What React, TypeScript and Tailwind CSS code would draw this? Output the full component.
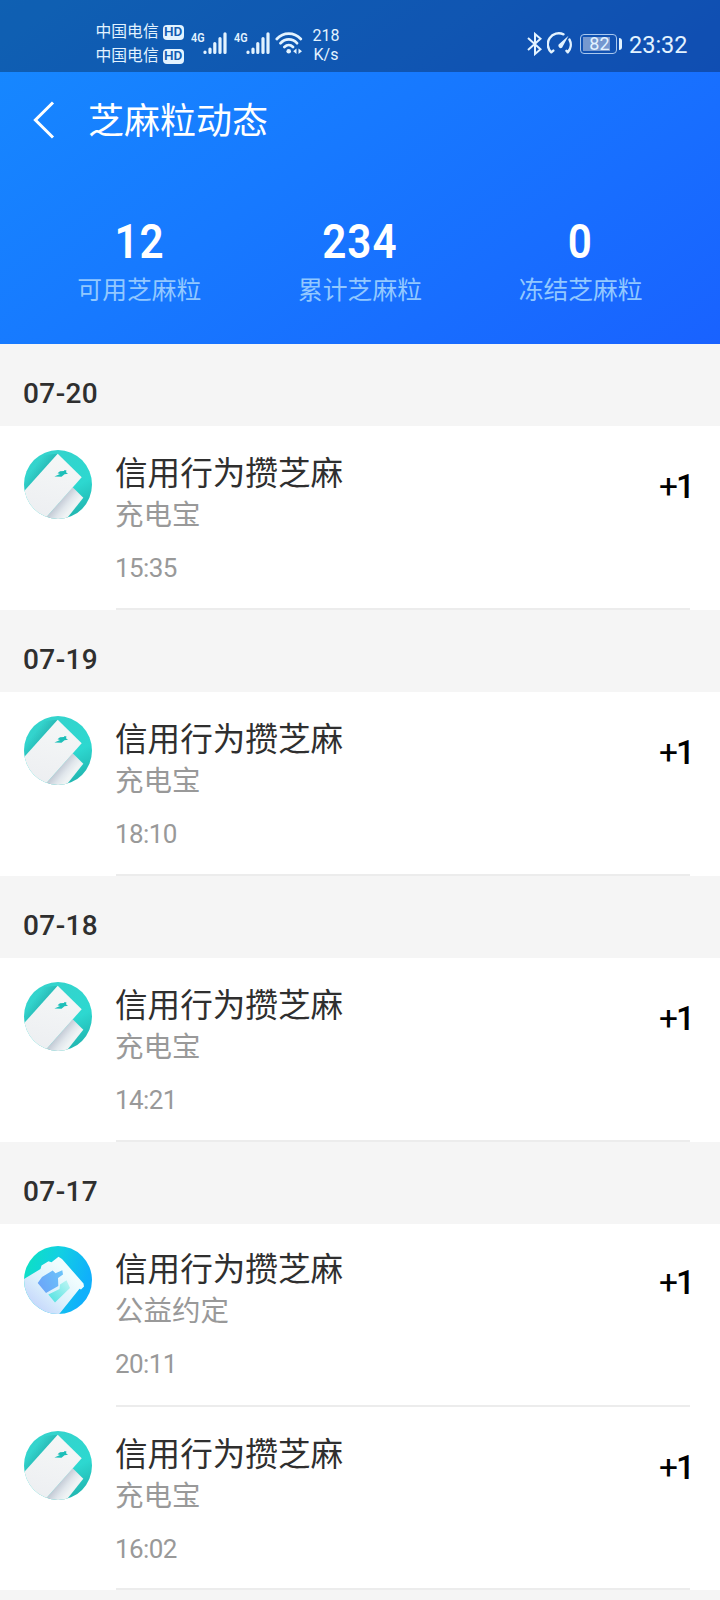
import clsx from 'clsx';

interface SesameRecord {
  title: string;
  source: string;
  time: string;
  points: number;
  kind: 'powerbank' | 'charity';
}

interface DayGroup {
  date: string;
  records: SesameRecord[];
}

const TITLE = '信用行为攒芝麻';

const stats = [
  { value: 12, label: '可用芝麻粒' },
  { value: 234, label: '累计芝麻粒' },
  { value: 0, label: '冻结芝麻粒' },
];

const groups: DayGroup[] = [
  { date: '07-20', records: [{ title: TITLE, source: '充电宝', time: '15:35', points: 1, kind: 'powerbank' }] },
  { date: '07-19', records: [{ title: TITLE, source: '充电宝', time: '18:10', points: 1, kind: 'powerbank' }] },
  { date: '07-18', records: [{ title: TITLE, source: '充电宝', time: '14:21', points: 1, kind: 'powerbank' }] },
  {
    date: '07-17',
    records: [
      { title: TITLE, source: '公益约定', time: '20:11', points: 1, kind: 'charity' },
      { title: TITLE, source: '充电宝', time: '16:02', points: 1, kind: 'powerbank' },
    ],
  },
];

function PowerBankIcon() {
  return (
    <svg viewBox="0 0 68 69" className="h-[69px] w-[68px] shrink-0">
      <defs>
        <clipPath id="pb-clip">
          <ellipse cx="34" cy="34.5" rx="34" ry="34.5" />
        </clipPath>
        <linearGradient id="pb-bg" x1="0.3" y1="0" x2="0.8" y2="1">
          <stop offset="0" stopColor="#35d3cc" />
          <stop offset="0.6" stopColor="#2dd8d0" />
          <stop offset="1" stopColor="#1fb0ab" />
        </linearGradient>
        <linearGradient id="pb-left" gradientUnits="userSpaceOnUse" x1="10" y1="17" x2="19" y2="24">
          <stop offset="0" stopColor="#1f9c9c" stopOpacity="0" />
          <stop offset="1" stopColor="#1f9c9c" stopOpacity="0.5" />
        </linearGradient>
        <linearGradient id="pb-back" gradientUnits="userSpaceOnUse" x1="34" y1="52" x2="45" y2="61">
          <stop offset="0" stopColor="#bfc6d2" />
          <stop offset="0.6" stopColor="#e1e7ec" />
          <stop offset="1" stopColor="#eff3f4" />
        </linearGradient>
        <linearGradient id="pb-card" x1="0.6" y1="0" x2="0.4" y2="1">
          <stop offset="0" stopColor="#f5f7f7" />
          <stop offset="1" stopColor="#eceef1" />
        </linearGradient>
      </defs>
      <g clipPath="url(#pb-clip)">
        <rect width="68" height="69" fill="url(#pb-bg)" />
        <path d="M20 5 33.7 3.8 1 40.2-4 34Z" fill="url(#pb-left)" />
        <path d="M48.7 37.3 59.3 47.8 40 72H18Z" fill="url(#pb-back)" />
        <path d="M33.7 3.8 57.7 27.2 22.7 66.8 18 72-6 48Z" fill="url(#pb-card)" />
        <path d="M36 21.3 40 21 40.5 20 42.5 20.5 42 22.3 44 23.8 40.5 24.3 37.5 26.8 30.4 26.6 36 24 33.5 23.2Z" fill="#1dbfb9" />
      </g>
    </svg>
  );
}

function CharityIcon() {
  return (
    <svg viewBox="0 0 68 68" className="h-[68px] w-[68px] shrink-0">
      <defs>
        <clipPath id="ch-clip">
          <circle cx="34" cy="34" r="34" />
        </clipPath>
        <linearGradient id="ch-bg" x1="0" y1="0.3" x2="0.9" y2="0.6">
          <stop offset="0" stopColor="#0de0c4" />
          <stop offset="0.45" stopColor="#12d0e2" />
          <stop offset="1" stopColor="#10b0fb" />
        </linearGradient>
        <linearGradient id="ch-card" x1="0.75" y1="0.25" x2="0.2" y2="0.8">
          <stop offset="0" stopColor="#f0fdfe" />
          <stop offset="0.5" stopColor="#dcf1fc" />
          <stop offset="1" stopColor="#c3d4fb" />
        </linearGradient>
        <linearGradient id="ch-blue" x1="0" y1="0.6" x2="1" y2="0.2">
          <stop offset="0" stopColor="#6ba5f8" />
          <stop offset="1" stopColor="#6bc3fa" />
        </linearGradient>
        <linearGradient id="ch-teal" x1="0" y1="1" x2="1" y2="0">
          <stop offset="0" stopColor="#4be0e0" />
          <stop offset="1" stopColor="#c0f6f4" />
        </linearGradient>
      </defs>
      <g clipPath="url(#ch-clip)">
        <rect width="68" height="68" fill="url(#ch-bg)" />
        <path d="M34.5 10.8 38 13 59.5 37.5 60 40.5 57 43.5 55.5 42.8 32 72-8 50 0 33 16.5 23 17.5 19.5 24.5 15.2 27.5 16.2Z" fill="url(#ch-card)" />
        <path d="M13.7 37 18 31 28.7 24.5 31.5 27.3 38.3 24.3 39 28.6 34 32 34.3 40 22 47Z" fill="url(#ch-blue)" />
        <path d="M24.3 48.5 35.5 43 36 38.5 42.5 34.3 46 42 31 56.6Z" fill="url(#ch-teal)" />
      </g>
    </svg>
  );
}

function HdBadge() {
  return (
    <span className="flex h-[15px] w-[21px] items-center justify-center rounded-[4px] bg-[#e3f3ff] text-[13.5px] leading-none font-semibold text-[#115ab0]">
      HD
    </span>
  );
}

function Carrier() {
  return (
    <div className="flex h-6 items-center gap-1">
      <span className="text-[15.8px] leading-6">中国电信</span>
      <HdBadge />
    </div>
  );
}

function Signal() {
  return (
    <div className="flex h-[22px] w-[37px] items-start">
      <span className="w-3 origin-left scale-x-[0.8] text-[13.5px] leading-[11px] font-semibold">4G</span>
      <svg viewBox="0 0 24 22" className="h-[22px] w-6" fill="none" stroke="currentColor" strokeWidth="3.2" strokeLinecap="round">
        <path d="M2 20V20.4M7 17V20.4M11.8 11.5V20.4M17 6.5V20.4M22 1.8V20.4" />
      </svg>
    </div>
  );
}

function WifiIcon() {
  return (
    <svg viewBox="0 0 28 22" className="h-[22px] w-7" fill="none" stroke="currentColor" strokeWidth="2.7" strokeLinecap="round">
      <path d="M1.8 7C8.5-0.3 19-0.3 25.8 7M5.5 11.2C10.3 6.2 17.3 6.2 22 11.2M9.4 15C12 12.5 15.5 12.5 18 15" />
      <circle cx="13.7" cy="19.2" r="2.3" fill="currentColor" stroke="none" />
      <path d="M21.5 16.5V22L18.2 19.2ZM23.5 16.5V22L27 19.2Z" fill="currentColor" stroke="none" />
    </svg>
  );
}

function StatusBar() {
  return (
    <div className="flex h-[72px] bg-black/30 pt-5 text-[#e3f3ff]">
      <div className="ml-[95.5px] flex w-[95.5px] flex-col">
        <Carrier />
        <Carrier />
      </div>
      <div className="flex items-start pt-3">
        <Signal />
        <div className="ml-[6px]">
          <Signal />
        </div>
        <div className="ml-[4px]">
          <WifiIcon />
        </div>
      </div>
      <div className="ml-[7px] flex w-8 flex-col items-center pt-[6px] text-[16px] leading-[19px]">
        <span>218</span>
        <span>K/s</span>
      </div>
      <div className="mr-[32.5px] ml-auto flex h-12 items-center">
        <svg viewBox="0 0 16 24" className="h-6 w-4" fill="none" stroke="currentColor" strokeWidth="2">
          <path d="M1 6 13.5 17.3 8 22V2L13.5 6.7 1 18" />
        </svg>
        <svg viewBox="0 0 26 24" className="ml-[4px] h-6 w-[26px]" fill="none" stroke="currentColor" strokeWidth="2.4" strokeLinecap="round">
          <path d="M4.3 20.3A11 11 0 0 1 16.5 2.3M22.5 7.6A11 11 0 0 1 20.7 20.3M4.3 20.3 6.3 18.6M20.7 20.3 19.4 18.8" />
          <path d="M21.5 3.8 15.2 15.6A2.4 2.4 0 0 1 11.6 12.6Z" fill="currentColor" stroke="none" />
        </svg>
        <div className="ml-[7px] flex h-5 w-[37px] rounded-[4px] border-[1.5px] border-[#a9c8ee] p-[2px]">
          <div className="flex h-full w-[27px] items-center justify-center bg-[#7598cf] pl-[6px] text-[18px] leading-none">
            82
          </div>
        </div>
        <div className="ml-[2px] h-3 w-[3px] rounded-r-sm bg-[#e3f3ff]" />
        <span className="ml-[7px] pt-[2px] text-[23.5px] leading-8">23:32</span>
      </div>
    </div>
  );
}

function Header() {
  return (
    <header className="h-[344px] bg-linear-[145deg,#168aff_0%,#1779ff_45%,#1962ff_100%] text-white">
      <StatusBar />
      <div className="flex h-24 items-center pl-[31px]">
        <svg viewBox="0 0 24 40" className="h-10 w-6" fill="none" stroke="currentColor" strokeWidth="3">
          <path d="M22 2.5 4.4 20 22 37.5" />
        </svg>
        <h1 className="ml-[33px] pt-1 text-[36px] leading-none">芝麻粒动态</h1>
      </div>
      <div className="flex px-[29px] pt-[46px]">
        {stats.map((stat) => (
          <div key={stat.label} className="flex flex-1 flex-col items-center">
            <span className="h-14 scale-x-[0.88] text-[48px] leading-14 font-semibold tracking-[1.2px]">
              {stat.value}
            </span>
            <span className="mt-[3px] text-[24.8px] leading-9 text-[#92c8ff]">{stat.label}</span>
          </div>
        ))}
      </div>
    </header>
  );
}

function RecordRow({ record, compact, raised }: { record: SesameRecord; compact: boolean; raised: boolean }) {
  return (
    <li className={clsx('flex bg-white pl-6', compact ? 'h-[183px]' : 'h-[184px]', raised ? 'pt-[22px]' : 'pt-6')}>
      {record.kind === 'charity' ? <CharityIcon /> : <PowerBankIcon />}
      <div className="mr-[30px] ml-6 flex flex-1 justify-between border-b-2 border-[#ececec]">
        <div className="-ml-px flex flex-col pt-[2px]">
          <span className="text-[32.6px] leading-[44px] text-[#2f2f2f]">{record.title}</span>
          <span className="mt-px text-[28.5px] leading-[38px] text-[#999]">{record.source}</span>
          <span className="mt-[14px] text-[26px] leading-[38px] tracking-[-0.6px] text-[#999]">{record.time}</span>
        </div>
        <span className="-mr-[5px] flex pt-[17px] text-[33.5px] leading-10 text-black">
          <span className="w-[17px]">+</span>
          <span className="font-medium">{record.points}</span>
        </span>
      </div>
    </li>
  );
}

export default function App() {
  return (
    <div className="h-[1600px] w-[720px] overflow-hidden bg-[#f5f5f5] font-[Roboto,'Noto_Sans_CJK_SC',sans-serif]">
      <Header />
      {groups.map((group) => (
        <section key={group.date}>
          <h2 className="flex h-[82px] items-center pt-[17px] pl-[23px] text-[28px] leading-none font-medium tracking-[0.4px] text-[#2f2f2f]">
            {group.date}
          </h2>
          <ul>
            {group.records.map((record) => (
              <RecordRow
                key={record.time}
                record={record}
                compact={group.records.length > 1}
                raised={record.kind === 'charity'}
              />
            ))}
          </ul>
        </section>
      ))}
    </div>
  );
}
